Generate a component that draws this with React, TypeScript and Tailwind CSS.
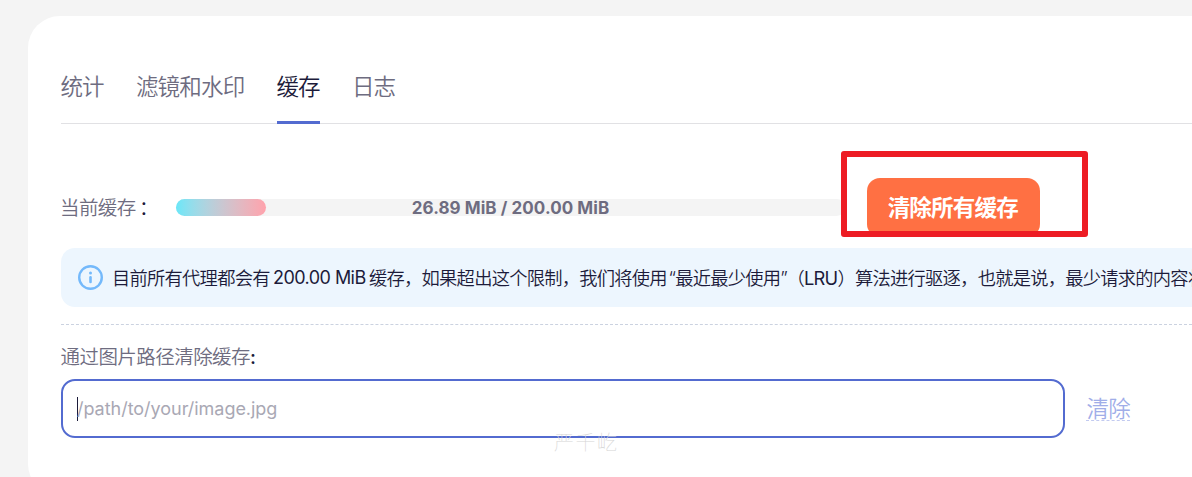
import React from "react";

type Tab = { label: string; width: string; active?: boolean };

const tabs: Tab[] = [
  { label: "统计", width: "w-[43px]" },
  { label: "滤镜和水印", width: "w-[108px]" },
  { label: "缓存", width: "w-[43px]", active: true },
  { label: "日志", width: "w-[43px]" },
];

function InfoIcon() {
  return (
    <svg className="h-[25px] w-[25px] shrink-0" viewBox="0 0 25 25" fill="none">
      <circle cx="12.5" cy="12.5" r="11.3" stroke="#74b9fb" strokeWidth="2.4" />
      <circle cx="12.5" cy="7.9" r="1.5" fill="#74b9fb" />
      <path d="M12.5 12.4v4.6" stroke="#74b9fb" strokeWidth="2.6" strokeLinecap="round" />
    </svg>
  );
}

function Tabs() {
  return (
    <nav className="flex h-[72px] gap-[32.5px] border-b border-[#e1e1e4]">
      {tabs.map((tab) => (
        <button
          key={tab.label}
          className={
            "flex h-[72px] shrink-0 items-start whitespace-nowrap border-b-3 pt-[19px] text-left text-[22.5px] leading-[32px] tracking-[-0.8px] " +
            tab.width +
            (tab.active ? " border-[#536bd0] text-[#1c1b3a]" : " border-transparent text-[#6e6c80]")
          }
        >
          <span className="-ml-[0.6px]">{tab.label}</span>
        </button>
      ))}
    </nav>
  );
}

function CacheUsage() {
  return (
    <div className="mt-[54px] flex h-[60px] items-center">
      <div className="-ml-px mb-px flex w-[116px] shrink-0 text-[19.5px] leading-[28px] tracking-[-0.6px]">
        <span className="w-[79px] text-[#6e6c80]">当前缓存</span>
        <span className="text-[#1c1b3a]">：</span>
      </div>
      <div className="mb-px grid h-[17px] w-[669px] shrink-0 items-center rounded-full bg-[#f4f4f4]">
        <div className="col-start-1 row-start-1 h-[17px] w-[90px] rounded-full bg-linear-to-r from-[#69e7f8] to-[#ffa2ac]" />
        <span className="col-start-1 row-start-1 justify-self-center whitespace-nowrap pt-[2px] text-[17px] font-bold leading-[15px] tracking-[0.07px] text-[#6e6c80]">
          26.89 MiB / 200.00 MiB
        </span>
      </div>
      <button className="mb-px ml-[22px] h-[59px] w-[173px] shrink-0 rounded-[13px] bg-[#ff7043] pr-[1.5px] pt-px text-[22.5px] font-bold leading-[32px] tracking-[-0.8px] text-white">
        清除所有缓存
      </button>
    </div>
  );
}

function Notice() {
  return (
    <div className="mt-[10px] flex h-[59px] items-center rounded-l-[14px] bg-[#edf6fe] pl-[17px]">
      <InfoIcon />
      <p className="ml-[9px] flex whitespace-nowrap text-[18.3px] leading-[28px] tracking-[-0.76px] text-[#1c1b3a]">
        <span className="w-[161px] shrink-0">目前所有代理都会有</span>
        <span className="w-[96px] shrink-0 text-[18px] font-normal tracking-[-0.55px]">200.00 MiB</span>
        <span className="w-[299.5px] shrink-0">缓存，如果超出这个限制，我们将使用</span>
        <span className="w-[118px] shrink-0">“最近最少使用”</span>
        <span className="shrink-0">
          （<span className="font-normal">LRU</span>）算法进行驱逐，也就是说，最少请求的内容将
        </span>
      </p>
    </div>
  );
}

function PurgeForm() {
  return (
    <form className="mt-[17px] border-t border-dashed border-[#cbd2e0] pt-[18px]">
      <label htmlFor="path" className="block text-[19.5px] leading-[28px] tracking-[-0.55px] text-[#6e6c80]">
        <span className="-ml-[0.5px]">通过图片路径清除缓存</span>
        <span className="font-medium text-[#1c1b3a]">:</span>
      </label>
      <div className="mt-[8px] flex items-center">
        <div className="flex h-[59px] w-[1004px] shrink-0 items-center rounded-[14px] border-2 border-[#536bd0] pl-[14px]">
          <span className="h-6 w-px shrink-0 bg-[#1c1b3a]" />
          <input
            id="path"
            placeholder="/path/to/your/image.jpg"
            className="-ml-px w-[900px] bg-transparent text-[18px] font-normal leading-[28px] tracking-[-0.03px] outline-none placeholder:text-[#a9a8b4]"
          />
        </div>
        <button
          type="button"
          className="ml-[21px] h-[25px] w-[44px] whitespace-nowrap border-b border-dashed border-[#c2caf0] pl-[0.5px] pt-px text-left text-[22.5px] leading-[24px] tracking-[-0.8px] text-[#a0ade8]"
        >
          清除
        </button>
      </div>
    </form>
  );
}

export default function App() {
  return (
    <div className="relative h-[477px] w-full overflow-hidden bg-[#f4f4f4] pl-[28px] pt-4 font-['Inter','Noto_Sans_CJK_SC',sans-serif]">
      <main className="h-[480px] rounded-l-[32px] bg-white pl-[33px] pt-[36px] font-[350]">
        <Tabs />
        <CacheUsage />
        <Notice />
        <PurgeForm />
      </main>
      <div className="absolute left-[841px] top-[151px] h-[86px] w-[247px] rounded-[3px] border-6 border-[#ed1c24]" />
      <span className="absolute left-[554px] top-[430px] whitespace-nowrap text-[20px] font-thin leading-[26px] tracking-[1.5px] text-[#d6d6d6]">
        严千屹
      </span>
    </div>
  );
}
